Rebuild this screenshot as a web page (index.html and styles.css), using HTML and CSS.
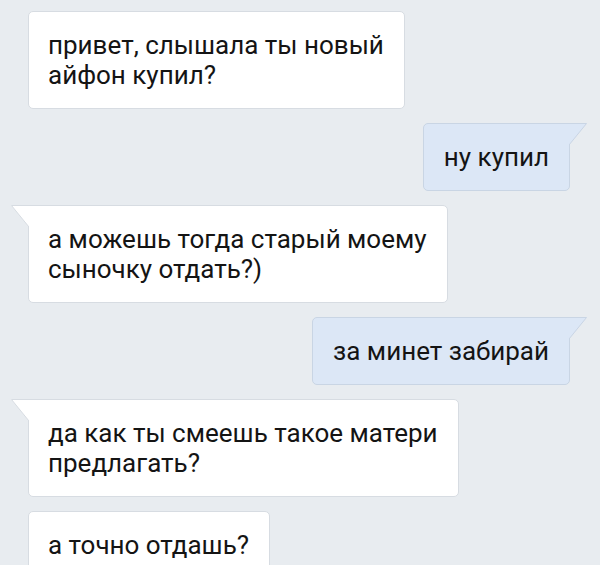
FILE: index.html
```html
<!DOCTYPE html>
<html lang="ru">
<head>
    <meta charset="UTF-8">
    <meta name="viewport" content="width=device-width, initial-scale=1.0">
    <title>Диалог</title>
    <link rel="stylesheet" href="styles.css">
</head>
<body>
    <div class="chat">
        <div class="msg in">привет, слышала ты новый<br>айфон купил?</div>

        <div class="msg out">
            <svg class="tail" width="18" height="22" viewBox="0 0 18 22">
                <polygon points="0,0 18,0 0,22" />
                <polyline points="0,0.5 17.5,0.5 0,22" />
            </svg>
            ну купил
        </div>

        <div class="msg in has-tail">
            <svg class="tail" width="18" height="22" viewBox="0 0 18 22">
                <polygon points="0,0 18,0 18,22" />
                <polyline points="18,0.5 0.5,0.5 18,22" />
            </svg>
            а можешь тогда старый моему<br>сыночку отдать?)
        </div>

        <div class="msg out">
            <svg class="tail" width="18" height="22" viewBox="0 0 18 22">
                <polygon points="0,0 18,0 0,22" />
                <polyline points="0,0.5 17.5,0.5 0,22" />
            </svg>
            за минет забирай
        </div>

        <div class="msg in has-tail">
            <svg class="tail" width="18" height="22" viewBox="0 0 18 22">
                <polygon points="0,0 18,0 18,22" />
                <polyline points="18,0.5 0.5,0.5 18,22" />
            </svg>
            да как ты смеешь такое матери<br>предлагать?
        </div>

        <div class="msg in">а точно отдашь?</div>
    </div>
</body>
</html>
```

FILE: styles.css
```css
body {
    margin: 0;
    background-color: #e8ecf0;
    font-family: Roboto, 'Noto Sans', sans-serif;
    color: #141414;
    overflow: hidden;
}

.chat {
    display: flex;
    flex-direction: column;
    gap: 14px;
    padding-top: 11px;
}

.msg {
    position: relative;
    width: fit-content;
    padding: 18px 20px 18px 19px;
    font-size: 26px;
    line-height: 30px;
    border-radius: 5px;
    border: 1px solid #d7dce2;
    background-color: #fff;
    white-space: nowrap;
}

.in {
    align-self: flex-start;
    margin-left: 28px;
}

.out {
    align-self: flex-end;
    margin-right: 30px;
    padding-left: 20px;
    background-color: #dce7f6;
    border-color: #c9d5e4;
    border-top-right-radius: 0;
}

.has-tail {
    border-top-left-radius: 0;
}

.tail {
    position: absolute;
    top: -1px;
}

.in .tail {
    left: -18px;
}

.in .tail polygon {
    fill: #fff;
}

.in .tail polyline {
    fill: none;
    stroke: #d7dce2;
    stroke-width: 1;
}

.out .tail {
    right: -18px;
}

.out .tail polygon {
    fill: #dce7f6;
}

.out .tail polyline {
    fill: none;
    stroke: #c9d5e4;
    stroke-width: 1;
}
```
